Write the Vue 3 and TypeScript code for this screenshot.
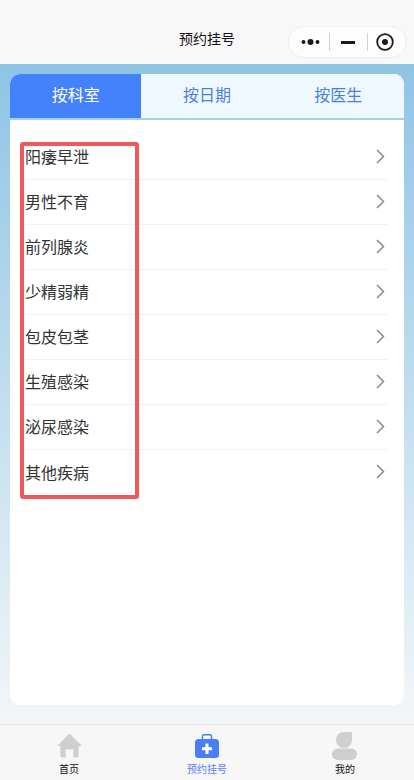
<script setup lang="ts">
const tabs = ["按科室", "按日期", "按医生"];
const departments = ["阳痿早泄", "男性不育", "前列腺炎", "少精弱精", "包皮包茎", "生殖感染", "泌尿感染", "其他疾病"];
</script>
<template>
  <div class="page">
    <header class="nav">
      <span class="nav-title">预约挂号</span>
      <div class="capsule">
        <svg class="cap-dots" width="20" height="8" viewBox="0 0 20 8">
          <circle cx="2.5" cy="4" r="2" />
          <circle cx="9.5" cy="4" r="3" />
          <circle cx="16.5" cy="4" r="2" />
        </svg>
        <i class="cap-sep"></i>
        <i class="cap-min"></i>
        <i class="cap-sep"></i>
        <svg class="cap-target" width="18" height="18" viewBox="0 0 18 18">
          <circle cx="9" cy="9" r="7.8" fill="none" stroke="#1a1a1a" stroke-width="1.8" />
          <circle cx="9" cy="9" r="3" fill="#1a1a1a" />
        </svg>
      </div>
    </header>

    <main class="body">
      <section class="card">
        <div class="tabs">
          <div v-for="(t, i) in tabs" :key="t" class="tab" :class="{ active: i === 0 }">{{ t }}</div>
        </div>
        <ul class="list">
          <li v-for="d in departments" :key="d" class="row">
            <span class="row-name">{{ d }}</span>
            <svg width="9" height="15" viewBox="0 0 9 15">
              <path d="M1 1 L7.5 7.5 L1 14" fill="none" stroke="#8a8a8a" stroke-width="1.5" />
            </svg>
          </li>
        </ul>
        <div class="marker"></div>
      </section>
    </main>

    <footer class="tabbar">
      <div class="bar-item">
        <svg class="bar-icon" width="25" height="25" viewBox="0 0 26 26">
          <path fill="#cfcfcf" d="M13 0.5 L26 13.5 L22.5 13.5 L22.5 24 Q22.5 25.5 21 25.5 L17 25.5 L17 17 L9 17 L9 25.5 L5 25.5 Q3.5 25.5 3.5 24 L3.5 13.5 L0 13.5 Z" />
        </svg>
        <span>首页</span>
      </div>
      <div class="bar-item on">
        <svg class="bar-icon" width="24" height="24" viewBox="0 0 24 24">
          <path fill="none" stroke="#4a7ef6" stroke-width="1.5" d="M7.5 6 V2.2 Q7.5 0.8 9 0.8 H15 Q16.5 0.8 16.5 2.2 V6" />
          <rect x="0" y="5" width="24" height="19" rx="3.5" fill="#4a7ef6" />
          <path fill="none" stroke="#fff" stroke-width="3" d="M12 9.5 V20 M7 14.8 H17" />
        </svg>
        <span>预约挂号</span>
      </div>
      <div class="bar-item person">
        <svg class="bar-icon" width="26" height="28" viewBox="0 0 26 28">
          <path fill="#cfcfcf" d="M12 0 H20 V8 A8 8 0 1 1 12 0 Z" />
          <rect x="0" y="16.5" width="25" height="11.5" rx="5.7" fill="#cfcfcf" />
        </svg>
        <span>我的</span>
      </div>
    </footer>
  </div>
</template>
<style scoped>
.page {
  width: 414px;
  height: 780px;
  display: flex;
  flex-direction: column;
  font-family: "Liberation Sans", "Noto Sans CJK SC", sans-serif;
  overflow: hidden;
}

.nav {
  height: 64px;
  flex: none;
  background: #f8f8f8;
  position: relative;
  display: flex;
  align-items: flex-end;
  justify-content: center;
  padding-bottom: 15px;
  box-sizing: border-box;
}

.nav-title {
  font-size: 14px;
  line-height: 20px;
  color: #111;
}

.capsule {
  position: absolute;
  left: 288px;
  top: 26px;
  width: 119px;
  height: 32px;
  box-sizing: border-box;
  border: 1px solid #eeeeee;
  border-radius: 16px;
  background: #fdfdfd;
  display: flex;
  align-items: center;
  padding-left: 12px;
}

.cap-dots {
  fill: #1a1a1a;
  flex: none;
}

.cap-sep {
  flex: none;
  width: 1px;
  height: 18px;
  background: #d2d2d2;
  margin-left: 8px;
}

.cap-min {
  flex: none;
  width: 14px;
  height: 3px;
  background: #1a1a1a;
  margin: 0 4px 0 11px;
}

.cap-target {
  flex: none;
  margin-left: 8px;
}

.body {
  flex: 1;
  padding: 10px 10px 19px;
  background: linear-gradient(to bottom, #8fc4e5, #f3f6f8);
  display: flex;
}

.card {
  flex: 1;
  background: #fff;
  border-radius: 10px;
  overflow: hidden;
  position: relative;
}

.tabs {
  display: flex;
  height: 44px;
  background: #f0f8ff;
  border-bottom: 2px solid #a3d2ec;
}

.tab {
  flex: 1;
  text-align: center;
  line-height: 44px;
  font-size: 16px;
  color: #4a7fdf;
}

.tab.active {
  background: #4381fd;
  color: #fff;
}

.list {
  list-style: none;
  margin: 0;
  padding: 15px 16px 0 15px;
}

.row {
  height: 45px;
  box-sizing: border-box;
  padding: 0 3px 2px 0;
  border-bottom: 1px solid #f1f1f1;
  display: flex;
  align-items: center;
  justify-content: space-between;
}

.row:last-child {
  border-bottom: none;
}

.row-name {
  font-size: 16px;
  color: #333;
}

.marker {
  position: absolute;
  left: 10px;
  top: 68px;
  width: 119px;
  height: 357px;
  box-sizing: border-box;
  border: 4px solid #ef595c;
  border-radius: 3px;
}

.tabbar {
  height: 56px;
  flex: none;
  box-sizing: border-box;
  background: #f7f7f7;
  border-top: 1px solid #e6e8e9;
  display: flex;
  justify-content: space-around;
}

.bar-item {
  flex: 1;
  display: flex;
  flex-direction: column;
  align-items: center;
  justify-content: flex-end;
  padding-bottom: 4px;
  font-size: 10px;
  line-height: 13px;
  color: #111;
}

.bar-icon {
  flex: none;
  margin-bottom: 5px;
}

.person .bar-icon {
  margin-bottom: 3px;
}

.bar-item.on {
  color: #5a7fe8;
}
</style>
<style>
body {
  margin: 0;
}
</style>
